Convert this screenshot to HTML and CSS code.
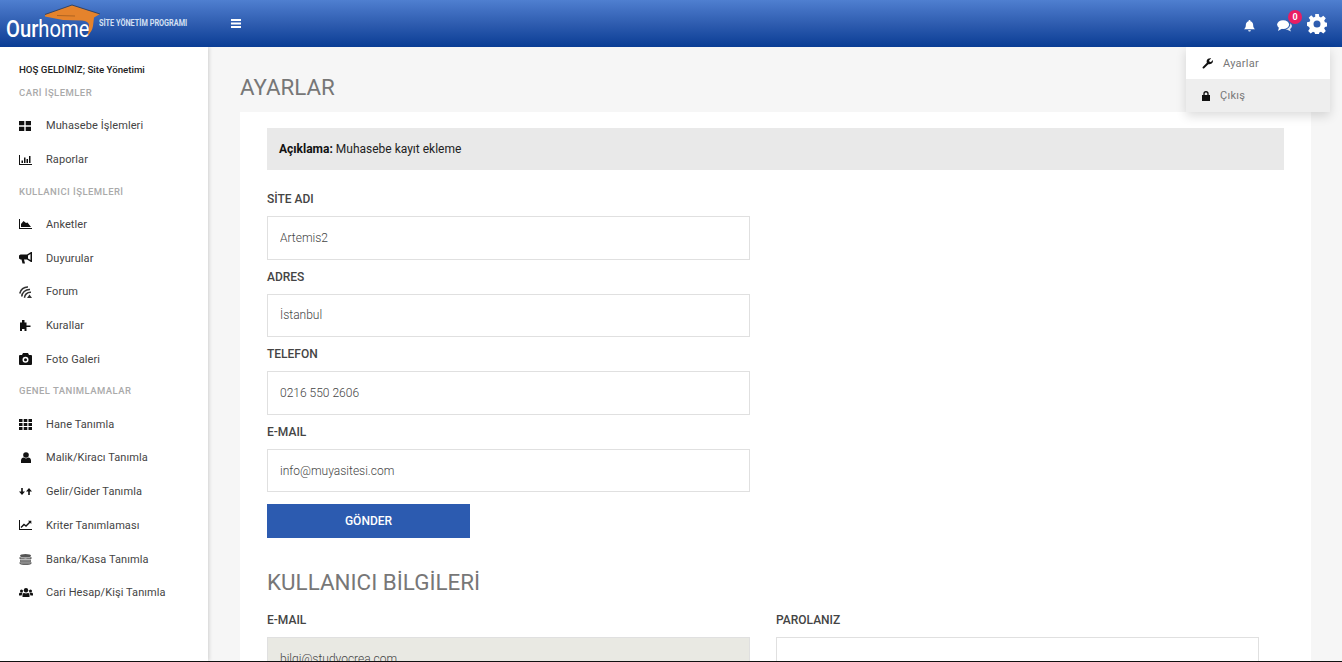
FILE: index.html
```html
<!DOCTYPE html>
<html lang="tr">
<head>
<meta charset="utf-8">
<title>Ourhome</title>
<link rel="stylesheet" href="styles.css">
</head>
<body>
<header class="topbar">
  <div class="brand">
    <span class="logo-word"><b>Our</b>home</span>
    <svg class="roof" viewBox="0 0 58 34" width="58" height="34"><path d="M1 10.500 L28 1 L56 10 L50 13.500 L49 22 Q48 28 43.500 31.500 Q45.500 26 45 21 Q44.500 17 38 16.500 L19 16 L1 12.500 Z" fill="#e5832c"/><path d="M1 10.500 L28 1 L56 10" fill="none" stroke="#2d3d5c" stroke-width=".9"/><path d="M13 11.500 L31 12" stroke="#a8601f" stroke-width=".9"/></svg>
    <span class="tagline">SİTE YÖNETİM PROGRAMI</span>
  </div>
  <svg class="burger" viewBox="0 0 10 9" width="10" height="9"><path d="M0 0h10v2H0zM0 3.500h10v2H0zM0 7h10v2H0z" fill="#fff"/></svg>
  <div class="top-icons">
    <svg class="bell" viewBox="0 0 12 13" width="11" height="12"><path d="M6 0a1 1 0 0 1 1 1.200C9 1.700 10 3.300 10 5.500 10 8 10.800 9 12 10H0C1.200 9 2 8 2 5.500 2 3.300 3 1.700 5 1.200A1 1 0 0 1 6 0zM4.500 11h3a1.500 1.500 0 0 1-3 0z" fill="#fff"/></svg>
    <span class="chat">
      <svg viewBox="0 0 16 13" width="15" height="12"><ellipse cx="6.500" cy="5" rx="6.500" ry="4.800" fill="#fff"/><path d="M2 8 L1 12 L6 9Z" fill="#fff"/><path d="M14.300 3.500C15.500 4.500 16 5.500 16 6.500 16 8 15 9 14 9.700L15 12.500 11 10.500H9C11 10 14.500 8 14.300 3.500Z" fill="#dfe7f3"/></svg>
      <span class="badge">0</span>
    </span>
    <svg class="gear" viewBox="0 0 20 20" width="20" height="20"><path fill="#fff" fill-rule="evenodd" d="M8.200 0h3.600l.5 2.700 1.700.7 2.300-1.600 2.500 2.500-1.600 2.300.7 1.700 2.600.5v3.600l-2.600.5-.7 1.700 1.600 2.300-2.500 2.500-2.300-1.600-1.700.7-.5 2.600H8.200l-.5-2.600-1.700-.7-2.300 1.600-2.500-2.500 1.600-2.300-.7-1.700L0 11.800V8.200l2.600-.5.700-1.700-1.600-2.300 2.500-2.500L6.500 3.400l1.700-.7zM10 6.500a3.500 3.500 0 1 0 0 7 3.500 3.500 0 0 0 0-7z"/></svg>
  </div>
</header>

<div class="dropdown">
  <a class="drop-item first">
    <svg viewBox="0 0 12 12" width="11" height="11"><path d="M0.800 9.700 5.300 5.200C4.700 3.400 5.300 1.800 6.600.9 7.700.2 9 0 10 .5L7.800 2.500 8.200 4 9.800 4.400 11.800 2.300C12.200 3.800 11.600 5.300 10.500 6.100 9.400 6.900 8 7 6.900 6.800L2.400 11.300C1.300 12 .1 10.800.8 9.700Z" fill="#111"/></svg>
    <span>Ayarlar</span>
  </a>
  <a class="drop-item second">
    <svg viewBox="0 0 9 11" width="8" height="10"><path fill="#111" fill-rule="evenodd" d="M1.500 4.500V3a3 3 0 0 1 6 0v1.500H9V11H0V4.500zM3 4.500h3V3a1.500 1.500 0 0 0-3 0z"/></svg>
    <span>Çıkış</span>
  </a>
</div>

<div class="layout">
  <aside class="sidebar">
    <p class="welcome">HOŞ GELDİNİZ; Site Yönetimi</p>
    <h6 class="nav-head">CARİ İŞLEMLER</h6>
    <ul class="nav-list">
      <li class="nav-item"><span class="nav-icon"><svg viewBox="0 0 12 10" width="12" height="10"><path d="M0 0h5.300v4.300H0zM6.700 0H12v4.300H6.700zM0 5.700h5.300V10H0zM6.700 5.700H12V10H6.700z" fill="#111"/></svg></span>Muhasebe İşlemleri</li>
      <li class="nav-item"><span class="nav-icon"><svg viewBox="0 0 13 10" width="13" height="10"><path d="M0 0h1v9h12v1H0zM2.500 5.500h1.500V8H2.500zM5 2.500h1.500V8H5zM7.500 4h1.500v4H7.500zM10 1h1.500v7H10z" fill="#111"/></svg></span>Raporlar</li>
    </ul>
    <h6 class="nav-head">KULLANICI İŞLEMLERİ</h6>
    <ul class="nav-list">
      <li class="nav-item"><span class="nav-icon"><svg viewBox="0 0 13 10" width="13" height="10"><path d="M0 0h1v9h12v1H0zM2 8V5L4.500 2 7 4 8.500 3.500 12 8z" fill="#111"/></svg></span>Anketler</li>
      <li class="nav-item"><span class="nav-icon"><svg viewBox="0 0 13 12" width="13" height="12"><path fill="#111" fill-rule="evenodd" d="M12 0h1v10h-1L8 7.500H5L6 11.500H3.500L2.500 7.500H1.500L0 6.500V3.500L1.500 2.500H8zM11.500 2 9 3.500v3L11.500 8z"/></svg></span>Duyurular</li>
      <li class="nav-item"><span class="nav-icon"><svg viewBox="0 0 13 12" width="13" height="12"><g fill="none" stroke="#333" stroke-width="1.600"><path d="M.8 7.500C1.500 3.500 5 .8 9 1"/><path d="M2.800 10.500C2.800 6.800 6.500 3.200 11 3.500"/><path d="M5.500 11.800C5.500 9 8 6 12 6.200"/></g><path d="M8 12L10.500 8.500 13 12z" fill="#333"/></svg></span>Forum</li>
      <li class="nav-item"><span class="nav-icon"><svg viewBox="0 0 12 11" width="12" height="11"><path d="M3 0h2.500v2.500H7.500V5.500H11.500V7H7.500V11H5.500V9H3v2H1V2.500H3z" fill="#111"/></svg></span>Kurallar</li>
      <li class="nav-item"><span class="nav-icon"><svg viewBox="0 0 13 12" width="13" height="12"><path fill="#111" fill-rule="evenodd" d="M4 0h5l1 2h2a1 1 0 0 1 1 1v8a1 1 0 0 1-1 1H1a1 1 0 0 1-1-1V3a1 1 0 0 1 1-1h2zM6.500 3.800a3 3 0 1 0 0 6 3 3 0 0 0 0-6zm0 1.500a1.500 1.500 0 1 1 0 3 1.500 1.500 0 0 1 0-3z"/></svg></span>Foto Galeri</li>
    </ul>
    <h6 class="nav-head">GENEL TANIMLAMALAR</h6>
    <ul class="nav-list">
      <li class="nav-item"><span class="nav-icon"><svg viewBox="0 0 13 11" width="13" height="11"><path d="M0 0h3.500v3H0zM4.700 0h3.600v3H4.700zM9.500 0H13v3H9.500zM0 4h3.500v3H0zM4.700 4h3.600v3H4.700zM9.500 4H13v3H9.500zM0 8h3.500v3H0zM4.700 8h3.600v3H4.700zM9.500 8H13v3H9.500z" fill="#111"/></svg></span>Hane Tanımla</li>
      <li class="nav-item"><span class="nav-icon nudge"><svg viewBox="0 0 10 11" width="10" height="11"><circle cx="5" cy="3" r="2.800" fill="#111"/><path d="M0 11V8.500C0 6.500 1.500 5.500 2.500 5.500L5 6.500 7.500 5.500C8.500 5.500 10 6.500 10 8.500V11z" fill="#111"/></svg></span>Malik/Kiracı Tanımla</li>
      <li class="nav-item"><span class="nav-icon"><svg viewBox="0 0 13 7" width="13" height="7"><path d="M2.200 0h1.600v3.500H6L3 7 0 3.500h2.200zM9.200 7h1.600V3.500H13L10 0 7 3.500h2.200z" fill="#111"/></svg></span>Gelir/Gider Tanımla</li>
      <li class="nav-item"><span class="nav-icon"><svg viewBox="0 0 13 10" width="13" height="10"><path d="M0 0h1v9h12v1H0z" fill="#111"/><path d="M2 7.500 5 4.500 7 6 11 2" fill="none" stroke="#111" stroke-width="1.400"/><path d="M9 .7h3.300V4z" fill="#111"/></svg></span>Kriter Tanımlaması</li>
      <li class="nav-item"><span class="nav-icon"><svg viewBox="0 0 13 11" width="13" height="11"><ellipse cx="6.500" cy="1.800" rx="5.500" ry="1.800" fill="#555"/><path d="M.5 3 6.500 4.500 12.500 3V5H.5z" fill="#666"/><path d="M1 5.500h11V8H1z" fill="#777"/><path d="M.5 8.200h12V9.500C12 10.500 9 11 6.500 11S1 10.500.5 9.500z" fill="#666"/><path d="M2 4.200h9M2 6.800h9M2 9.500h9" stroke="#999" stroke-width=".6"/></svg></span>Banka/Kasa Tanımla</li>
      <li class="nav-item"><span class="nav-icon"><svg viewBox="0 0 14 9" width="14" height="9"><circle cx="7" cy="2.200" r="2.200" fill="#111"/><circle cx="2.500" cy="3" r="1.500" fill="#111"/><circle cx="11.500" cy="3" r="1.500" fill="#111"/><path d="M3.500 9V7C3.500 5.500 4.500 5 5 5L7 5.500 9 5c.5 0 1.500.5 1.500 2V9zM0 7.500V6C0 5 .7 4.700 1.300 4.700H3.500L2.500 7.500zM14 7.500V6c0-1-.7-1.300-1.300-1.300H10.500L11.500 7.500z" fill="#111"/></svg></span>Cari Hesap/Kişi Tanımla</li>
    </ul>
  </aside>

  <main class="content">
    <h1 class="page-title">AYARLAR</h1>
    <section class="card">
      <div class="notice"><strong>Açıklama:</strong> Muhasebe kayıt ekleme</div>
      <form class="site-form">
        <label class="field-label first-label">SİTE ADI</label>
        <input class="field" value="Artemis2">
        <label class="field-label">ADRES</label>
        <input class="field" value="İstanbul">
        <label class="field-label">TELEFON</label>
        <input class="field" value="0216 550 2606">
        <label class="field-label">E-MAIL</label>
        <input class="field" value="info@muyasitesi.com">
        <button class="submit" type="button">GÖNDER</button>
      </form>
      <h2 class="section-title">KULLANICI BİLGİLERİ</h2>
      <div class="user-grid">
        <div>
          <label class="field-label first-label">E-MAIL</label>
          <input class="field locked" value="bilgi@studyocrea.com">
        </div>
        <div>
          <label class="field-label first-label">PAROLANIZ</label>
          <input class="field" value="">
        </div>
      </div>
    </section>
  </main>
</div>
</body>
</html>
```
FILE: styles.css
```css
* { box-sizing: border-box; }
html, body { margin: 0; padding: 0; height: 662px; overflow: hidden; }
body {
  font-family: Roboto, "Liberation Sans", sans-serif;
  background: #f6f6f6;
  color: #333;
  border-bottom: 1px solid #111;
  display: flex;
  flex-direction: column;
}
.topbar {
  height: 47px;
  flex: none;
  display: flex;
  align-items: center;
  background: linear-gradient(180deg, #4f7fd0 0%, #2f5db0 50%, #0a3d95 100%);
  position: relative;
  z-index: 3;
}
.brand {
  width: 231px;
  flex: none;
  height: 47px;
  position: relative;
}
.roof { position: absolute; left: 44px; top: 4px; }
.logo-word {
  position: absolute;
  left: 6px;
  top: 16px;
  font-size: 23px;
  line-height: 28px;
  color: #fff;
  font-weight: 400;
  transform: scaleX(.88);
  transform-origin: left center;
}
.logo-word b { font-weight: 500; }
.tagline {
  position: absolute;
  left: 99px;
  top: 18px;
  font-size: 8.500px;
  line-height: 11px;
  font-weight: 700;
  color: #d5e0f3;
  white-space: nowrap;
  transform: scaleX(.86);
  transform-origin: left center;
}
.burger { display: block; }
.top-icons {
  margin-left: auto;
  display: flex;
  align-items: center;
  padding-right: 15px;
}
.bell { margin-right: 22px; margin-top: 4px; }
.chat { position: relative; display: block; width: 15px; height: 12px; margin-right: 15px; margin-top: 5px; }
.chat svg { display: block; }
.badge {
  position: absolute;
  left: 11px;
  top: -10px;
  width: 14px;
  height: 14px;
  border-radius: 50%;
  background: #e91e63;
  color: #fff;
  font-size: 9px;
  font-weight: 700;
  line-height: 14px;
  text-align: center;
}
.gear { display: block; }
.dropdown {
  position: absolute;
  left: 1186px;
  top: 47px;
  width: 144px;
  z-index: 4;
  background: #fff;
  box-shadow: 0 4px 10px rgba(0, 0, 0, .14);
}
.drop-item {
  display: flex;
  align-items: center;
  height: 32px;
  font-size: 11px;
  color: #777;
  letter-spacing: .25px;
}
.drop-item.first { padding-left: 16px; gap: 10px; }
.drop-item.second { padding-left: 16px; gap: 10px; background: #eee; height: 33px; }
.layout { flex: 1; display: flex; min-height: 0; }
.sidebar {
  width: 208px;
  flex: none;
  background: #fff;
  box-shadow: 1px 0 4px rgba(0, 0, 0, .16);
  padding: 17px 0 0 19px;
  position: relative;
  z-index: 2;
}
.welcome {
  margin: 0;
  font-size: 9.700px;
  line-height: 12px;
  font-weight: 500;
  color: #222;
}
.nav-head {
  margin: 0;
  font-size: 9.500px;
  line-height: 16px;
  font-weight: 500;
  color: #aaa;
  letter-spacing: .45px;
}
.welcome + .nav-head { margin-top: 9px; }
.nav-list { list-style: none; margin: 8px 0 7px; padding: 0; }
.nav-item {
  height: 33.750px;
  display: flex;
  align-items: center;
  font-size: 11px;
  letter-spacing: .08px;
  color: #444;
}
.nav-icon {
  width: 27px;
  flex: none;
  display: flex;
  align-items: center;
}
.nav-icon.nudge { padding-left: 2px; }
.nav-icon svg { display: block; }
.content { flex: 1; min-width: 0; padding: 0 31px 0 32px; overflow: hidden; }
.page-title {
  margin: 0;
  height: 65px;
  padding-top: 28px;
  font-size: 22.300px;
  line-height: 25px;
  font-weight: 400;
  color: #777;
}
.card {
  background: #fff;
  padding: 16px 27px 0;
}
.notice {
  height: 42px;
  background: #e9e9e9;
  padding: 0 12px;
  display: flex;
  align-items: center;
  gap: 3px;
  font-size: 12px;
  color: #222;
}
.notice strong { font-weight: 700; color: #111; }
.site-form { display: block; padding-top: 18px; }
.field-label {
  display: block;
  margin-top: 6px;
  margin-bottom: 8px;
  height: 20px;
  line-height: 22px;
  font-size: 12px;
  font-weight: 500;
  color: #444;
}
.first-label { margin-top: 0; }
.field {
  display: block;
  width: 483px;
  height: 43.600px;
  border: 1px solid #e0e0e0;
  background: #fff;
  padding: 0 12px;
  font-family: inherit;
  font-size: 12px;
  font-weight: 300;
  color: #444;
  outline: none;
}
.locked { background: #e9e9e3; }
.submit {
  display: block;
  width: 203px;
  height: 34px;
  margin-top: 12px;
  border: 0;
  background: #2c5bb0;
  color: #fff;
  font-family: inherit;
  font-size: 12px;
  font-weight: 500;
}
.section-title {
  margin: 28px 0 0;
  height: 42.600px;
  font-size: 22.400px;
  line-height: 33px;
  font-weight: 400;
  color: #777;
}
.user-grid {
  display: grid;
  grid-template-columns: 483px 483px;
  column-gap: 26px;
}
```
